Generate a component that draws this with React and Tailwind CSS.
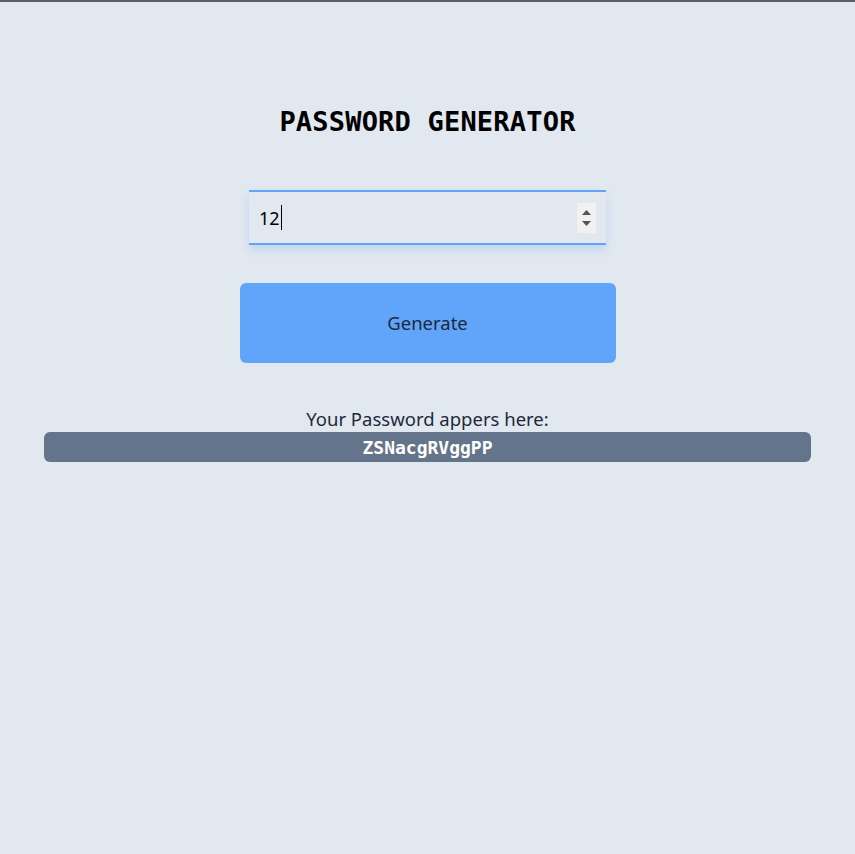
export default function App() {
  return (
    <div className="min-h-[854px] w-full bg-[#e2e8f0] border-t-2 border-[#5a5e66] flex flex-col items-center" style={{ fontFamily: '"Noto Sans", "Open Sans", sans-serif' }}>
      <h1 className="mt-[104px] text-[27px] leading-[32px] font-bold text-black tracking-[0.2px]" style={{ fontFamily: '"DejaVu Sans Mono", "Liberation Mono", monospace' }}>
        PASSWORD GENERATOR
      </h1>
      <div className="mt-[52px] w-[357px] h-[55px] border-y-2 border-[#60a5fa] shadow-[0_5px_8px_rgba(96,165,250,0.25)] flex items-center pl-[10px] pr-[10px]">
        <span className="text-[18px] text-black leading-none">12</span>
        <span className="w-px h-[25px] bg-black ml-px"></span>
        <div className="ml-auto w-[19px] h-[30px] bg-[#f1f1f1] flex flex-col items-center justify-center gap-[6px]">
          <svg width="9" height="5" viewBox="0 0 9 5"><path d="M4.5 0L9 5H0z" fill="#555" /></svg>
          <svg width="9" height="5" viewBox="0 0 9 5"><path d="M0 0H9L4.5 5z" fill="#555" /></svg>
        </div>
      </div>
      <button className="mt-[38px] w-[376px] h-[80px] rounded-[6px] bg-[#60a5fa] text-[18.5px] text-[#1e293b]">
        Generate
      </button>
      <p className="mt-[43px] text-[18.5px] leading-[26px] text-[#1e293b]">Your Password appers here:</p>
      <div className="w-[767px] h-[30px] rounded-[6px] bg-[#64748b] flex items-center justify-center text-white text-[18px] font-bold" style={{ fontFamily: '"DejaVu Sans Mono", "Liberation Mono", monospace' }}>
        ZSNacgRVggPP
      </div>
    </div>
  );
}
